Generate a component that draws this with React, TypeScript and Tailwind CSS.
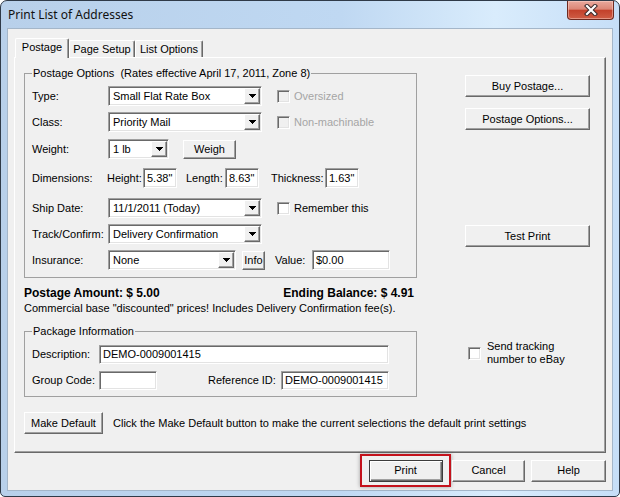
import React from "react";

const raised =
  "bg-[#f0f0f0] border border-t-white border-l-white border-r-[#696969] border-b-[#696969] shadow-[inset_-1px_-1px_0_#a0a0a0]";
const sunken =
  "border border-t-[#a0a0a0] border-l-[#a0a0a0] border-r-white border-b-white shadow-[inset_1px_1px_0_#696969,inset_-1px_-1px_0_#e3e3e3]";

function Arrow() {
  return (
    <div className={`${raised} w-[16px] h-full flex items-center justify-center shrink-0`}>
      <svg width="7" height="4" viewBox="0 0 7 4" shapeRendering="crispEdges">
        <rect x="0" y="0" width="7" height="1" fill="#000" />
        <rect x="1" y="1" width="5" height="1" fill="#000" />
        <rect x="2" y="2" width="3" height="1" fill="#000" />
        <rect x="3" y="3" width="1" height="1" fill="#000" />
      </svg>
    </div>
  );
}

function Combo({ value, className }: { value: string; className: string }) {
  return (
    <div className={`${sunken} ${className} bg-white h-[20px] flex p-[1px] shrink-0`}>
      <div className="flex-1 pl-[3px] flex items-center whitespace-nowrap overflow-hidden">{value}</div>
      <Arrow />
    </div>
  );
}

function Field({ value, className }: { value?: string; className: string }) {
  return (
    <div className={`${sunken} ${className} bg-white flex items-center pl-[3px] shrink-0 whitespace-nowrap`}>
      {value}
    </div>
  );
}

function Btn({ children, className }: { children: React.ReactNode; className: string }) {
  return (
    <button className={`${raised} ${className} flex items-center justify-center shrink-0 leading-[13px]`}>
      {children}
    </button>
  );
}

function Check({ disabled }: { disabled?: boolean }) {
  return (
    <div
      className={`${sunken} w-[13px] h-[13px] shrink-0 ${disabled ? "bg-[#f0f0f0]" : "bg-white"}`}
    />
  );
}

export default function App() {
  return (
    <div className="w-[620px] h-[497px] bg-white">
      <div className="w-[620px] h-[497px] rounded-t-[7px] rounded-b-[5px] border border-[#2f3a48] bg-[linear-gradient(to_right,#b8d0ea_0%,#bfd8f2_55%,#d9ecfc_80%,#c6def7_100%)] flex flex-col font-['Liberation_Sans',Arial,sans-serif] text-[11px] leading-[13px] text-black">
        {/* title bar */}
        <div className="h-[27px] flex items-start shrink-0">
          <div className="pl-[7px] pt-[6px] font-['Noto_Sans',sans-serif] text-[12px] leading-[16px] text-[#111]">
            Print List of Addresses
          </div>
          <div className="ml-auto mr-[5px] w-[47px] h-[19px] rounded-b-[4px] border border-t-0 border-[#6e2a20] bg-[linear-gradient(to_bottom,#e9a99d_0%,#dc8676_45%,#c3412b_52%,#cf5d45_100%)] flex items-center justify-center shadow-[inset_0_0_0_1px_rgba(255,220,210,0.45)]">
            <svg width="14" height="12" viewBox="0 0 14 12">
              <path d="M3 2L11 10M11 2L3 10" stroke="#3b2a2a" strokeWidth="4.2" strokeLinecap="square" />
              <path d="M3 2L11 10M11 2L3 10" stroke="#ffffff" strokeWidth="2.2" strokeLinecap="square" />
            </svg>
          </div>
        </div>

        {/* client area */}
        <div className="mx-[6px] mb-[5px] flex-1 border border-[#a4b6c9] bg-[#f0f0f0] px-[6px] pt-[9px] flex flex-col">
          {/* tabs */}
          <div className="flex items-end h-[19px] pl-[1px]">
            <div className="relative z-10 -mb-px w-[54px] h-[20px] pb-[2px] bg-[#f0f0f0] border-t border-l border-r border-t-white border-l-white border-r-[#696969] shadow-[inset_-1px_0_0_#a0a0a0] rounded-t-[2px] flex items-center justify-center">
              Postage
            </div>
            <div className="w-[66px] h-[17px] border-t border-l border-r border-t-white border-l-white border-r-[#696969] shadow-[inset_-1px_0_0_#a0a0a0] rounded-t-[2px] flex items-center justify-center">
              Page Setup
            </div>
            <div className="w-[68px] h-[17px] border-t border-l border-r border-t-white border-l-white border-r-[#696969] shadow-[inset_-1px_0_0_#a0a0a0] rounded-t-[2px] flex items-center justify-center">
              List Options
            </div>
          </div>

          {/* tab panel */}
          <div className="h-[396px] border border-t-white border-l-white border-r-[#696969] border-b-[#696969] shadow-[inset_-1px_-1px_0_#a0a0a0] pl-[9px] pt-[9px] flex flex-col shrink-0">
            <div className="flex">
              {/* left column */}
              <div className="w-[393px] flex flex-col">
                <fieldset className="border border-[#a0a0a0] pl-[7px] pb-[7px]">
                  <legend className="px-[1px] whitespace-pre">Postage Options  (Rates effective April 17, 2011, Zone 8)</legend>
                  <div className="mt-[6px] h-[20px] flex items-center">
                    <span className="w-[76px]">Type:</span>
                    <Combo value="Small Flat Rate Box" className="w-[154px]" />
                    <div className="ml-[15px]"><Check disabled /></div>
                    <span className="ml-[4px] text-[#a5a5a5]">Oversized</span>
                  </div>
                  <div className="mt-[6px] h-[20px] flex items-center">
                    <span className="w-[76px]">Class:</span>
                    <Combo value="Priority Mail" className="w-[154px]" />
                    <div className="ml-[15px]"><Check disabled /></div>
                    <span className="ml-[4px] text-[#a5a5a5]">Non-machinable</span>
                  </div>
                  <div className="mt-[7px] h-[20px] flex items-center">
                    <span className="w-[76px]">Weight:</span>
                    <Combo value="1 lb" className="w-[61px]" />
                    <Btn className="ml-[14px] w-[53px] h-[19px]">Weigh</Btn>
                  </div>
                  <div className="mt-[9px] h-[20px] flex items-center">
                    <span className="w-[75px]">Dimensions:</span>
                    <span className="w-[36px]">Height:</span>
                    <Field value={'5.38"'} className="w-[34px] h-[20px]" />
                    <span className="ml-[9px] w-[39px]">Length:</span>
                    <Field value={'8.63"'} className="w-[34px] h-[20px]" />
                    <span className="ml-[12px] w-[54px]">Thickness:</span>
                    <Field value={'1.63"'} className="w-[34px] h-[20px]" />
                  </div>
                  <div className="mt-[10px] h-[20px] flex items-center">
                    <span className="w-[76px]">Ship Date:</span>
                    <Combo value="11/1/2011 (Today)" className="w-[154px]" />
                    <div className="ml-[15px]"><Check /></div>
                    <span className="ml-[4px]">Remember this</span>
                  </div>
                  <div className="mt-[6px] h-[20px] flex items-center">
                    <span className="w-[76px]">Track/Confirm:</span>
                    <Combo value="Delivery Confirmation" className="w-[154px]" />
                  </div>
                  <div className="mt-[6px] h-[20px] flex items-center">
                    <span className="w-[76px]">Insurance:</span>
                    <Combo value="None" className="w-[128px]" />
                    <Btn className="ml-[6px] w-[23px] h-[19px]">Info</Btn>
                    <span className="ml-[10px] w-[37px]">Value:</span>
                    <Field value="$0.00" className="w-[78px] h-[20px]" />
                  </div>
                </fieldset>

                <div className="mt-[9px] flex justify-between pr-[3px] font-bold text-[12px] leading-[13px]">
                  <span>Postage Amount: $ 5.00</span>
                  <span>Ending Balance: $ 4.91</span>
                </div>
                <div className="mt-[2px] whitespace-nowrap">
                  Commercial base "discounted" prices! Includes Delivery Confirmation fee(s).
                </div>

                <fieldset className="mt-[10px] border border-[#a0a0a0] pl-[7px] pb-[6px]">
                  <legend className="px-[1px]">Package Information</legend>
                  <div className="mt-[7px] h-[19px] flex items-center">
                    <span className="w-[67px]">Description:</span>
                    <Field value="DEMO-0009001415" className="w-[290px] h-[19px]" />
                  </div>
                  <div className="mt-[7px] h-[19px] flex items-center">
                    <span className="w-[67px]">Group Code:</span>
                    <Field className="w-[58px] h-[19px]" />
                    <span className="ml-[51px] w-[73px]">Reference ID:</span>
                    <Field value="DEMO-0009001415" className="w-[108px] h-[19px]" />
                  </div>
                </fieldset>
              </div>

              {/* right column */}
              <div className="ml-[48px] w-[125px] flex flex-col">
                <Btn className="mt-[8px] w-[125px] h-[22px]">Buy Postage...</Btn>
                <Btn className="mt-[11px] w-[125px] h-[22px]">Postage Options...</Btn>
                <Btn className="mt-[95px] w-[125px] h-[22px]">Test Print</Btn>
                <div className="mt-[93px] flex items-center">
                  <div className="ml-[3px]"><Check /></div>
                  <div className="ml-[6px]">
                    Send tracking
                    <br />
                    number to eBay
                  </div>
                </div>
              </div>
            </div>

            <div className="mt-[15px] flex items-center">
              <Btn className="w-[79px] h-[22px]">Make Default</Btn>
              <span className="ml-[10px] whitespace-nowrap">
                Click the Make Default button to make the current selections the default print settings
              </span>
            </div>
          </div>

          {/* dialog buttons */}
          <div className="mt-[1px] flex items-center justify-end">
            <div className="w-[91px] h-[33px] border-2 border-[#c4121c] shadow-[0_0_4px_rgba(0,0,0,0.35)] flex items-center justify-center">
              <button className="w-[74px] h-[22px] bg-[#f0f0f0] border border-[#3c3c3c] shadow-[inset_1px_1px_0_white,inset_-1px_-1px_0_#696969,inset_-2px_-2px_0_#a0a0a0] leading-[13px]">
                Print
              </button>
            </div>
            <Btn className="ml-[1px] w-[73px] h-[22px]">Cancel</Btn>
            <Btn className="ml-[6px] w-[75px] h-[22px]">Help</Btn>
          </div>
        </div>
      </div>
    </div>
  );
}
